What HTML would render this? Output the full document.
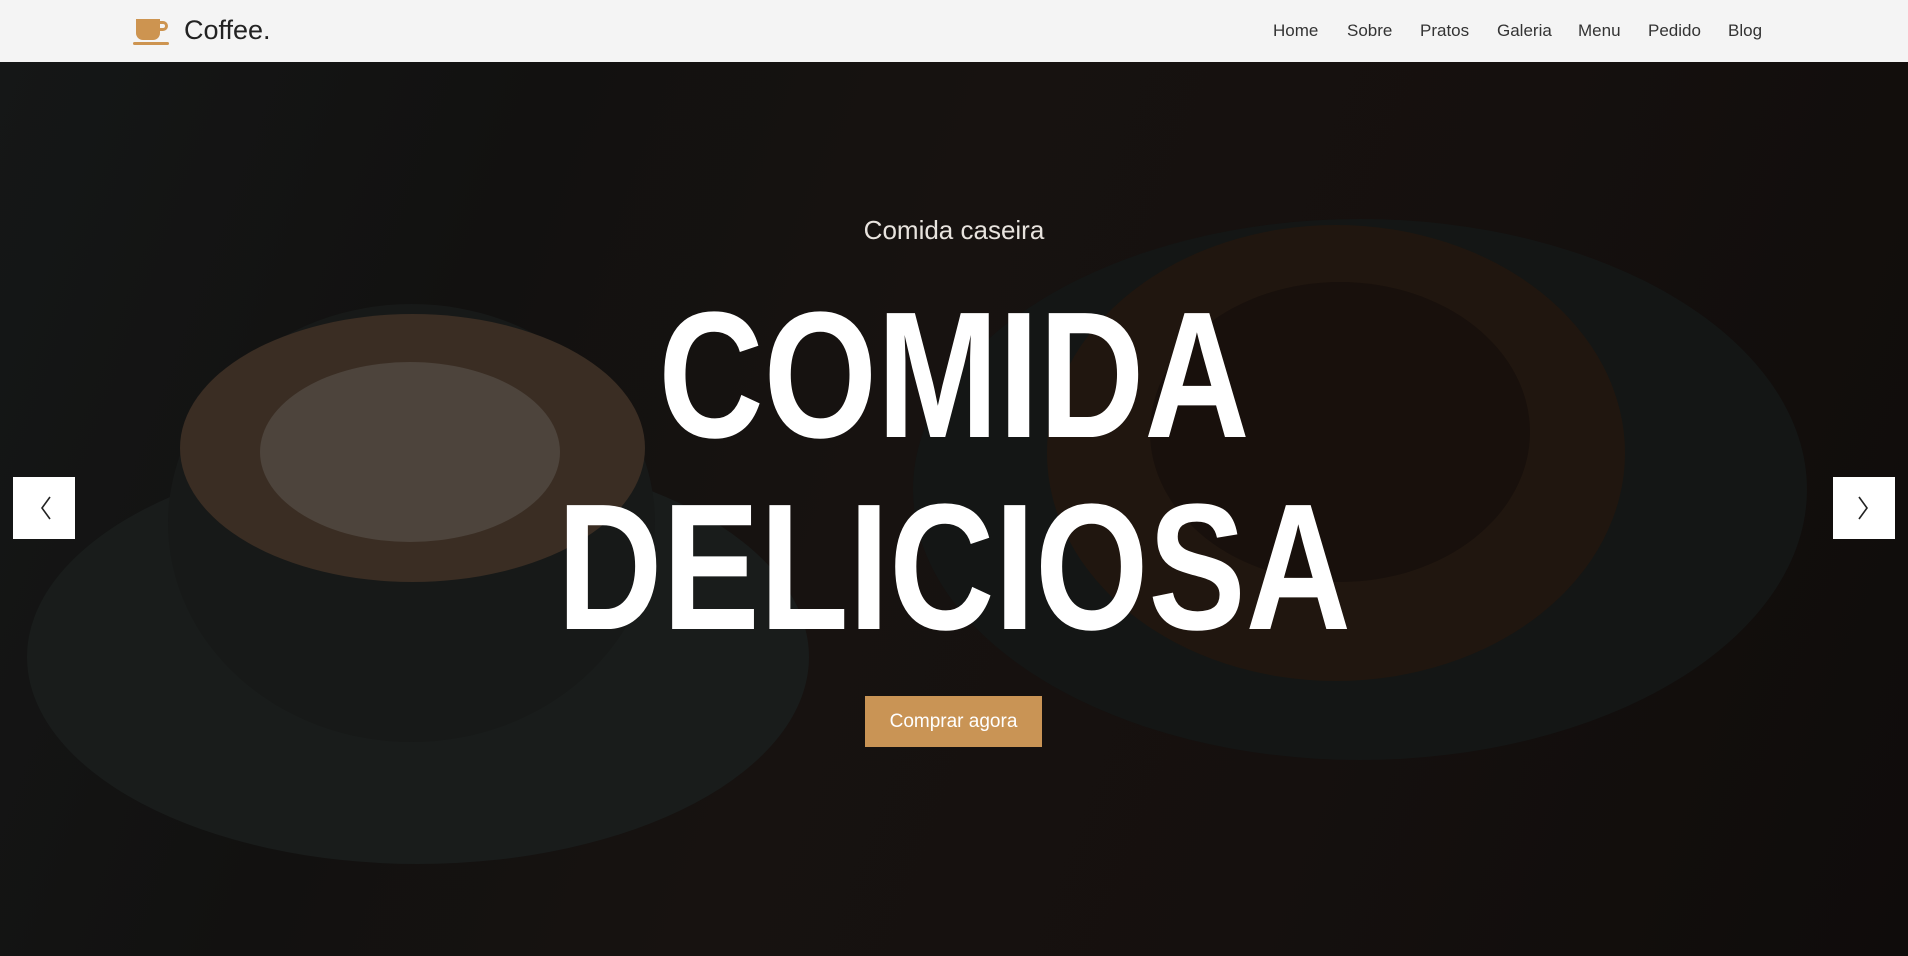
<!DOCTYPE html>
<html><head><meta charset="utf-8"><style>
*{margin:0;padding:0;box-sizing:border-box}
body{width:1908px;height:956px;overflow:hidden;background:#120f0d;font-family:"Liberation Sans",sans-serif;position:relative}
header{position:absolute;left:0;top:0;width:1908px;height:62px;background:#f4f4f4;z-index:5}
.logo{position:absolute;left:184px;top:15px;font-size:27px;color:#222}
.nav a{position:absolute;top:21px;font-size:17px;color:#333;text-decoration:none}
.hero{position:absolute;left:0;top:62px;width:1908px;height:894px;overflow:hidden;
background:linear-gradient(110deg,#151717 0%,#121110 25%,#171210 45%,#15100e 70%,#0f0c0b 100%)}
.s{position:absolute;border-radius:50%}
.t1{position:absolute;left:0;width:1908px;text-align:center;color:#e8e3de;font-size:26px;top:215px}
.big{position:absolute;left:0;width:1908px;text-align:center;color:#fff;font-weight:700;font-size:180px;line-height:1}
.big span{display:inline-block;transform:scaleX(.81)}
.btn{position:absolute;left:865px;top:696px;width:177px;height:51px;background:#c99455;color:#fff;font-size:19px;text-align:center;line-height:51px}
.arr{position:absolute;top:477px;width:62px;height:62px;background:#fff}
</style></head><body>
<header>
<svg style="position:absolute;left:133px;top:18px" width="38" height="28" viewBox="0 0 38 28">
<path d="M3 1h24v14a7 7 0 0 1-7 7H10a7 7 0 0 1-7-7z" fill="#cd9450"/>
<path d="M27 3h3a5 5 0 0 1 0 10h-3v-3h3a2 2 0 0 0 0-4h-3z" fill="#cd9450"/>
<rect x="0" y="24" width="36" height="3" rx="1.5" fill="#cd9450"/>
</svg>
<div class="logo">Coffee.</div>
<div class="nav">
<a style="left:1273px">Home</a><a style="left:1347px">Sobre</a><a style="left:1420px">Pratos</a><a style="left:1497px">Galeria</a><a style="left:1578px">Menu</a><a style="left:1648px">Pedido</a><a style="left:1728px">Blog</a>
</div>
</header>
<div class="hero">
<div class="s" style="left:27px;top:388px;width:782px;height:414px;background:#191c1b"></div>
<div class="s" style="left:913px;top:157px;width:894px;height:541px;background:#141615"></div>
<div class="s" style="left:1047px;top:163px;width:578px;height:456px;background:#20160f"></div>
<div class="s" style="left:1150px;top:220px;width:380px;height:300px;background:#18100c"></div>
<div class="s" style="left:168px;top:242px;width:487px;height:438px;background:#171918"></div>
<div class="s" style="left:180px;top:252px;width:465px;height:268px;background:#3a2d23"></div>
<div class="s" style="left:260px;top:300px;width:300px;height:180px;background:#5a534c;opacity:.6"></div>
</div>
<div class="t1">Comida caseira</div>
<div class="big" style="top:286px"><span>COMIDA</span></div>
<div class="big" style="top:478px"><span>DELICIOSA</span></div>
<div class="btn">Comprar agora</div>
<div class="arr" style="left:13px"><svg width="62" height="62"><path d="M37 20L29 31L37 42" fill="none" stroke="#222" stroke-width="1.6"/></svg></div>
<div class="arr" style="left:1833px"><svg width="62" height="62"><path d="M26 20L34 31L26 42" fill="none" stroke="#222" stroke-width="1.6"/></svg></div>
</body></html>
